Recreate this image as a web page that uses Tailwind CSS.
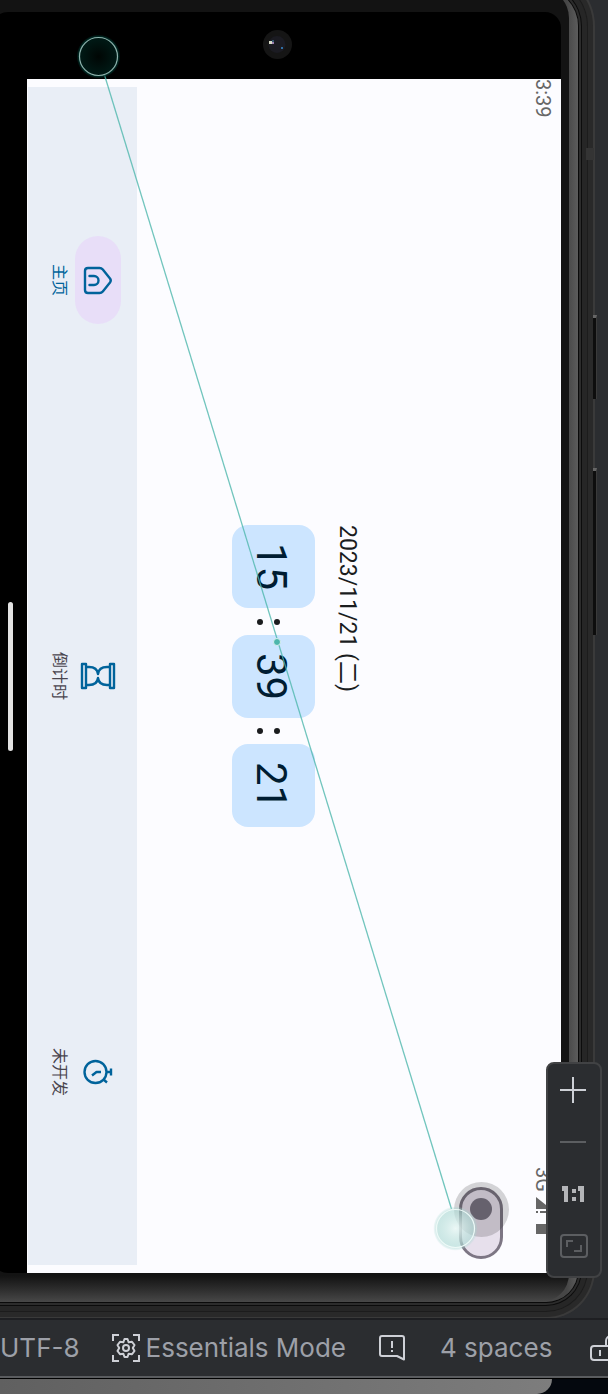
<!DOCTYPE html>
<html lang="zh">
<head>
<meta charset="utf-8">
<meta name="viewport" content="width=device-width, initial-scale=1">
<title>Emulator</title>
<script src="https://cdn.jsdelivr.net/npm/@tailwindcss/browser@4"></script>
</head>
<body class="flex min-h-screen flex-col overflow-x-hidden bg-[#2b2d30] font-['Roboto','Noto_Sans_CJK_SC',sans-serif]">

<section class="relative flex flex-1 flex-col overflow-hidden" aria-label="Running device">
  <!-- Device frame: metal rim rings around the bezel -->
  <div class="-mt-3 mr-[30px] mb-4 flex flex-1 rounded-tr-[38px] rounded-br-[32px] bg-linear-to-r from-[#464646] from-98% to-[#5c5c5c] pr-[9px] shadow-[0_0_0_1px_#0a0a0a,0_0_0_3px_#2c2c2c,0_0_0_4px_#0c0c0c,0_0_0_9px_#262626,0_0_0_10px_#1c1c1c,0_0_0_15px_#292929,0_0_0_17px_#3a3a3a]">
    <div class="flex flex-1 rounded-tr-[30px] rounded-br-[28px] bg-linear-to-b from-[#131313] from-98% to-[#484848] pt-6 pr-2 pb-[29px]">
      <!-- Display -->
      <div class="-ml-2 flex flex-1 flex-col rounded-tl-2xl rounded-tr-2xl rounded-bl-2xl bg-black pl-2">
        <div class="relative h-[67px]">
          <svg class="absolute top-4 left-[261px] size-8" viewBox="0 0 32 32" aria-hidden="true">
            <circle cx="16.500" cy="16.500" r="14.500" fill="#151515"/>
            <circle cx="16" cy="16.500" r="8.500" fill="#1b1b22"/>
            <rect x="8" y="13" width="3" height="3" fill="#d8dcc8"/>
            <rect x="11" y="14" width="2" height="2" fill="#9c7fae"/>
            <rect x="11" y="12" width="2" height="2" fill="#31536e"/>
            <rect x="20" y="19" width="2" height="2" fill="#2f6fa5"/>
          </svg>
        </div>
        <div class="flex flex-1">
          <div class="flex w-[27px] items-center pl-2">
            <div class="h-[149px] w-[5px] rounded-full bg-[#e2e2e2]"></div>
          </div>
          <div class="flex flex-1 bg-[#fcfcff] py-2 pl-px">
            <nav class="flex w-[109px] flex-col gap-[10px] bg-[#e9eef6]">
              <button class="flex flex-1 items-center gap-[5px] pl-5 text-[#00639b]">
                <span class="w-[22px] text-base leading-[22px] [writing-mode:vertical-rl] [text-orientation:sideways]">主页</span>
                <span class="flex h-[88px] w-[46px] items-center justify-center rounded-full bg-[#e8def8]">
                  <svg class="size-8" viewBox="0 0 32 32" fill="none" stroke="currentColor" stroke-width="2.400" stroke-linecap="round" stroke-linejoin="round" aria-hidden="true">
                    <path d="M6 4H17.500Q19.500 4 20.800 5.600L28 14.500Q29.500 16.500 28 18.500L20.800 27.400Q19.500 29 17.500 29H6Q3 29 3 26V7Q3 4 6 4Z"/>
                    <path d="M7.500 12H12A4.500 4.500 0 0 1 12 21H7.500"/>
                  </svg>
                </span>
              </button>
              <button class="flex flex-1 items-center gap-[5px] pl-5 text-[#49454f]">
                <span class="w-[22px] text-base leading-[22px] [writing-mode:vertical-rl] [text-orientation:sideways]">倒计时</span>
                <span class="flex h-[88px] w-[46px] items-center justify-center text-[#00639b]">
                  <svg class="h-8 w-9" viewBox="0 0 36 32" fill="none" stroke="currentColor" stroke-width="2.400" stroke-linejoin="round" aria-hidden="true">
                    <path d="M2 4H6V28H2ZM30 4H34V28H30Z"/>
                    <path d="M6 7H9C15 7 17.500 10 18 14C18.500 10 21 7 27 7H30M6 25H9C15 25 17.500 22 18 18C18.500 22 21 25 27 25H30"/>
                  </svg>
                </span>
              </button>
              <button class="flex flex-1 items-center gap-[5px] pl-5 text-[#49454f]">
                <span class="w-[22px] text-base leading-[22px] [writing-mode:vertical-rl] [text-orientation:sideways]">未开发</span>
                <span class="flex h-[88px] w-[46px] items-center justify-center text-[#00639b]">
                  <svg class="size-8" viewBox="0 0 32 32" fill="none" stroke="currentColor" stroke-width="2.400" aria-hidden="true">
                    <circle cx="13.500" cy="16" r="11"/>
                    <path d="M25 16H29M29 12.500V19.500M21.500 23.500L25 26.500"/>
                    <path d="M19 16H14.500L10 19.500" stroke-linejoin="round"/>
                  </svg>
                </span>
              </button>
            </nav>

            <main class="flex flex-1 justify-between pl-[95px]">
              <div class="flex items-start gap-5 self-center">
                <div class="flex flex-col items-center text-[42px] leading-[79px] text-[#001d32]">
                  <div class="size-[83px] rounded-2xl bg-[#cce5ff] pr-1 text-center [writing-mode:vertical-rl] [text-orientation:sideways]">15</div>
                  <div class="flex h-[27px] items-center gap-[11px] pr-[10px]"><i class="size-[6px] rounded-full bg-[#1a1c1e]"></i><i class="size-[6px] rounded-full bg-[#1a1c1e]"></i></div>
                  <div class="size-[83px] rounded-2xl bg-[#cce5ff] pr-1 text-center [writing-mode:vertical-rl] [text-orientation:sideways]">39</div>
                  <div class="flex h-[26px] items-center gap-[11px] pr-[10px]"><i class="size-[6px] rounded-full bg-[#1a1c1e]"></i><i class="size-[6px] rounded-full bg-[#1a1c1e]"></i></div>
                  <div class="size-[83px] rounded-2xl bg-[#cce5ff] pr-1 text-center [writing-mode:vertical-rl] [text-orientation:sideways]">21</div>
                </div>
                <time class="text-[23px] leading-6 whitespace-nowrap text-[#1a1c1e] [writing-mode:vertical-rl] [text-orientation:sideways]">2023/11/21 (二)</time>
              </div>

              <div class="flex gap-7">
                <label class="relative mb-[6px] block self-end">
                  <input type="checkbox" role="switch" aria-label="Switch" class="block h-[72px] w-[44px] appearance-none rounded-full border-3 border-[#7d7684] bg-[#e7e0ec]">
                  <i class="absolute top-[-5px] left-[-5px] size-[55px] rounded-full bg-black/16"></i>
                  <i class="absolute top-[11px] left-[11px] size-[22px] rounded-full bg-[#66616d]"></i>
                </label>
                <div class="-my-2 flex w-[30px] flex-col justify-between pr-[6px] pb-[38px] text-xl leading-6 text-[#666]">
                  <span class="[writing-mode:vertical-rl] [text-orientation:sideways]">3:39</span>
                  <span class="flex flex-col gap-[5px]">
                    <span class="[writing-mode:vertical-rl] [text-orientation:sideways]">3G</span>
                    <svg class="h-[38px] w-6" viewBox="0 0 24 38" fill="#666" aria-hidden="true"><path d="M5 0L20 12H5ZM5 14H7V16H5ZM9 14H20V16H9ZM5 27H20V37H5Z"/></svg>
                  </span>
                </div>
              </div>
            </main>
          </div>
        </div>
      </div>
    </div>
  </div>

  <!-- Hardware keys -->
  <i class="absolute top-[315px] right-[11px] h-[84px] w-1 border-t-3 border-r border-[#666] border-r-[#3a3a3a] bg-[#0d0d0d]"></i>
  <i class="absolute top-[468px] right-[11px] h-[167px] w-1 border-t-3 border-r border-[#666] border-r-[#3a3a3a] bg-[#0d0d0d]"></i>
  <i class="absolute top-[148px] right-[14px] h-3 w-2 bg-[#343434]"></i>

  <!-- Two finger gesture -->
  <svg class="pointer-events-none absolute top-0 left-0 h-[1318px] w-[608px]" viewBox="0 0 608 1318" fill="none" aria-hidden="true">
    <defs>
      <radialGradient id="dark"><stop offset="0" stop-color="#000604"/><stop offset=".85" stop-color="#001a16"/><stop offset=".9" stop-color="#00372f" stop-opacity=".8"/><stop offset="1" stop-color="#00372f" stop-opacity="0"/></radialGradient>
      <radialGradient id="light"><stop offset="0" stop-color="#eaf7f5" stop-opacity=".9"/><stop offset=".85" stop-color="#a9d8d2" stop-opacity=".6"/><stop offset="1" stop-color="#a9d8d2" stop-opacity="0.100"/></radialGradient>
    </defs>
    <path d="M104.500 75L451.500 1209" stroke="#4db6ac" stroke-opacity=".8" stroke-width="1.300"/>
    <circle cx="98.500" cy="56.500" r="22" fill="url(#dark)"/>
    <circle cx="98.500" cy="56.500" r="19" stroke="#8fb3ae" stroke-width="1.200"/>
    <circle cx="455.500" cy="1228.500" r="22" fill="url(#light)"/>
    <circle cx="455.500" cy="1228.500" r="19" stroke="#eefaf8" stroke-width="1.200"/>
    <circle cx="277" cy="642" r="3.500" fill="#4db6ac" stroke="#d9f0ef"/>
  </svg>

  <!-- Zoom controls -->
  <div class="absolute right-[6px] bottom-10 flex w-14 flex-col rounded-lg border-2 border-[#414244] bg-[#2b2d30] pb-1 text-[#ced0d6]">
    <button class="flex h-[52px] items-center justify-center pr-[2px]" aria-label="Zoom in"><svg class="size-[26px]" viewBox="0 0 26 26" stroke="currentColor" stroke-width="2" aria-hidden="true"><path d="M0 13H26M13 0V26"/></svg></button>
    <button class="flex h-[52px] items-center justify-center pr-[2px] text-[#5c5e61]" aria-label="Zoom out"><svg class="size-[26px]" viewBox="0 0 26 26" stroke="currentColor" stroke-width="2" aria-hidden="true"><path d="M0 13H26"/></svg></button>
    <button class="flex h-[52px] items-center justify-center text-[#b4b5b8]" aria-label="Actual size"><svg class="h-4 w-6" viewBox="0 0 24 16" fill="currentColor" aria-hidden="true"><path d="M0 0H6V16H2V5H0ZM16 0H22V16H18V5H16ZM10 3H14V7H10ZM10 11H14V15H10Z"/></svg></button>
    <button class="flex h-[52px] items-center justify-center text-[#5c5e61]" aria-label="Fit to screen"><svg class="h-6 w-7" viewBox="0 0 28 24" fill="none" stroke="currentColor" stroke-width="2" aria-hidden="true"><rect x="1" y="1" width="26" height="22" rx="3"/><path d="M7 13V7H13M14 17H21V11"/></svg></button>
  </div>
</section>

<!-- Status bar -->
<footer class="flex h-[60px] items-center overflow-hidden border-t-2 border-b-2 border-t-[#1e1f22] border-b-[#5a5c5f] bg-[#2b2d30] pb-px font-['Inter',sans-serif] text-[26px] leading-8 whitespace-nowrap text-[#9da0a8]">
  <button class="shrink-0">UTF-8</button>
  <button class="ml-8 flex shrink-0 items-center gap-[6px]">
    <svg class="size-7" viewBox="0 0 28 28" fill="none" stroke="#ced0d6" stroke-width="2" aria-hidden="true">
      <path d="M1 7V1H7M21 1H27V7M27 21V27H21M7 27H1V21"/>
      <path d="M12.500 5H15.500L16.700 8.300L20 7.800L22.500 11L20.800 14L22.500 17L20 20.200L16.700 19.700L15.500 23H12.500L11.300 19.700L8 20.200L5.500 17L7.200 14L5.500 11L8 7.800L11.300 8.300Z" stroke-linejoin="round"/>
      <circle cx="14" cy="14" r="3"/>
    </svg>
    Essentials Mode
  </button>
  <button class="ml-8 shrink-0" aria-label="Notifications">
    <svg class="h-[26px] w-7" viewBox="0 0 28 26" fill="none" stroke="#ced0d6" stroke-width="2" stroke-linejoin="round" aria-hidden="true">
      <path d="M4 1H24Q26 1 26 3V24.500L19 21H4Q2 21 2 19V3Q2 1 4 1Z"/><path d="M14 6V13M14 15V17"/>
    </svg>
  </button>
  <button class="ml-[34px] shrink-0">4 spaces</button>
  <button class="ml-[37px] shrink-0" aria-label="Writable">
    <svg class="h-7 w-8" viewBox="0 0 32 28" fill="none" stroke="#ced0d6" stroke-width="2" aria-hidden="true">
      <rect x="2" y="12" width="20" height="14" rx="3"/><path d="M11 16V22M17 12V7A5 5 0 0 1 27 7V9"/>
    </svg>
  </button>
</footer>
<div class="h-4 border-t border-black bg-[#04080e]">
  <div class="mr-14 h-full rounded-br-[18px] bg-linear-to-r from-[#606060] to-[#7d7d7d]"></div>
</div>
</body>
</html>
